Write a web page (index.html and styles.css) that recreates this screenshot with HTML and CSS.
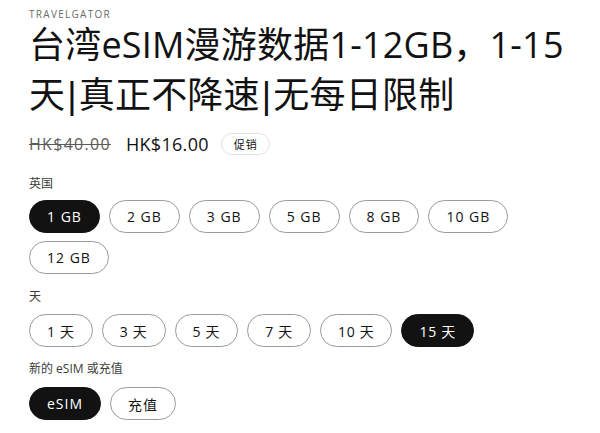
FILE: index.html
```html
<!DOCTYPE html>
<html lang="zh-CN">
<head>
<meta charset="utf-8">
<title>台湾eSIM</title>
<link rel="stylesheet" href="styles.css">
</head>
<body>
<main class="product">
  <p class="brand">TRAVELGATOR</p>
  <h1 class="title">台湾eSIM漫游数据1-12GB，1-15天<span class="sep">|</span>真正不降速<span class="sep">|</span>无每日限制</h1>
  <div class="price-row">
    <s class="price-old">HK$40.00</s>
    <span class="price-new">HK$16.00</span>
    <span class="badge">促销</span>
  </div>
  <div class="option option-data">
    <div class="option-label">英国</div>
    <div class="pills">
      <span class="pill active">1 GB</span>
      <span class="pill">2 GB</span>
      <span class="pill">3 GB</span>
      <span class="pill">5 GB</span>
      <span class="pill">8 GB</span>
      <span class="pill">10 GB</span>
      <span class="pill">12 GB</span>
    </div>
  </div>
  <div class="option option-days">
    <div class="option-label">天</div>
    <div class="pills">
      <span class="pill pill-cjk">1 天</span>
      <span class="pill pill-cjk">3 天</span>
      <span class="pill pill-cjk">5 天</span>
      <span class="pill pill-cjk">7 天</span>
      <span class="pill pill-cjk">10 天</span>
      <span class="pill pill-cjk active">15 天</span>
    </div>
  </div>
  <div class="option option-type">
    <div class="option-label">新的 eSIM 或充值</div>
    <div class="pills">
      <span class="pill active">eSIM</span>
      <span class="pill">充值</span>
    </div>
  </div>
</main>
</body>
</html>
```

FILE: styles.css
```css
* { box-sizing: border-box; }
html, body {
  margin: 0;
  padding: 0;
  background: #ffffff;
}
body {
  font-family: "Open Sans", "Noto Sans CJK SC", sans-serif;
  color: #121212;
}
.product {
  padding: 0 29px;
  width: 600px;
}
.brand {
  margin: 9px 0 0;
  font-size: 10px;
  line-height: 10px;
  letter-spacing: 1.3px;
  color: #6b6b6b;
}
.title {
  margin: 1px 0 0;
  font-size: 36px;
  line-height: 50px;
  font-weight: 400;
  letter-spacing: 0.2px;
  color: #121212;
}
.sep {
  font-family: "Liberation Sans", sans-serif;
  font-weight: 400;
  margin: 0 2px;
}
.price-row {
  margin-top: 11px;
  height: 24px;
  display: flex;
  align-items: center;
}
.price-old {
  font-size: 16px;
  letter-spacing: 1.3px;
  color: #5a5a5a;
  margin-right: 15px;
}
.price-new {
  font-size: 18px;
  letter-spacing: 0.3px;
  color: #121212;
  margin-right: 12px;
}
.badge {
  display: inline-flex;
  align-items: center;
  height: 22px;
  padding: 0 12px;
  border: 1px solid #e2e2e2;
  border-radius: 11px;
  font-size: 11px;
  letter-spacing: 0.8px;
  color: #121212;
}
.option-label {
  font-size: 12px;
  line-height: 16px;
  color: #3c3c3c;
}
.option-data { margin-top: 20px; }
.option-days { margin-top: 15px; }
.option-type { margin-top: 14px; }
.pills {
  display: flex;
  flex-wrap: wrap;
  gap: 8px 9px;
  margin-top: 8px;
}
.option-days .pills { margin-top: 9px; }
.option-type .pills { margin-top: 10px; }
.pill {
  display: inline-flex;
  align-items: center;
  justify-content: center;
  height: 33px;
  padding: 0 17px;
  border: 1px solid #9a9a9a;
  border-radius: 17px;
  font-size: 14px;
  letter-spacing: 1px;
  color: #121212;
  background: #ffffff;
}
.pill-cjk {
  padding: 0 17px;
  letter-spacing: 0.7px;
}
.pill.active {
  background: #121212;
  border-color: #121212;
  color: #ffffff;
}
```
